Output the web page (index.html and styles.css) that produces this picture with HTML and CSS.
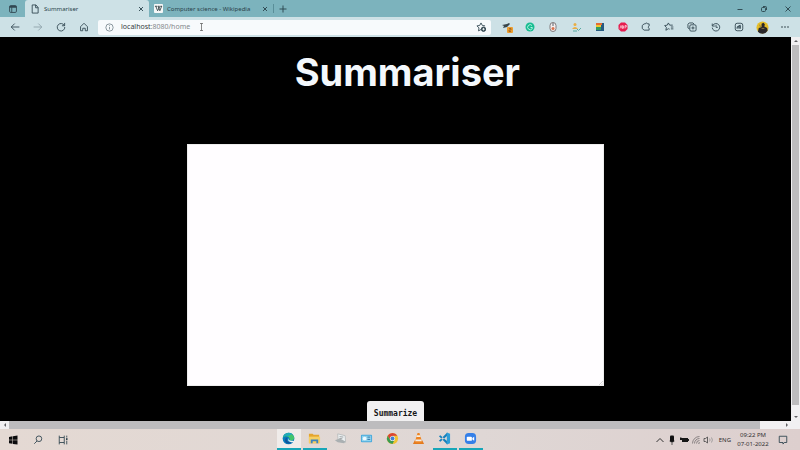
FILE: index.html
```html
<!DOCTYPE html>
<html lang="en">
<head>
<meta charset="utf-8">
<meta name="viewport" content="width=device-width, initial-scale=1">
<title>Summariser</title>
<link rel="stylesheet" href="styles.css">
</head>
<body>
<header class="tabstrip">
  <button class="tab-menu" aria-label="Tab actions"><svg class="icon" viewBox="0 0 16 16"><rect x="2.500" y="2.500" width="11" height="11" rx="2"/><path d="M2.500 4.500h11" stroke-width="3"/><path d="M6 5v8"/></svg></button>
  <div class="tab tab-active">
    <svg class="icon" viewBox="0 0 16 16"><path d="M3.500 1.500h6l3.500 4v9h-9.500zM9 1.500v4.500h4"/></svg>
    <span class="tab-title">Summariser</span>
    <button class="close" aria-label="Close Summariser"><svg viewBox="0 0 8 8"><path d="M2 2l4 4M6 2L2 6"/></svg></button>
  </div>
  <div class="tab">
    <svg class="wiki" viewBox="0 0 10 10"><rect width="10" height="10" rx="1" fill="#f6f8f8"/><path d="M1 2.500h2.500M4.200 2.500h2M7 2.500h2M2 2.500l2 5 2.700-5M4.500 2.500l2 5 2-5" fill="none" stroke="#29363a" stroke-width=".9"/></svg>
    <span class="tab-title">Computer science - Wikipedia</span>
    <button class="close" aria-label="Close Wikipedia"><svg viewBox="0 0 8 8"><path d="M2 2l4 4M6 2L2 6"/></svg></button>
  </div>
  <button class="new-tab" aria-label="New tab"><svg viewBox="0 0 8 8"><path d="M4 .5v7M.5 4h7"/></svg></button>
  <div class="window-controls">
    <button aria-label="Minimize"><svg viewBox="0 0 8 8"><path d="M1.500 4.500h5"/></svg></button>
    <button aria-label="Restore"><svg viewBox="0 0 8 8"><rect x="1.500" y="2.500" width="4" height="4" rx="1"/><path d="M3 1.500h2.500a1 1 0 0 1 1 1V5"/></svg></button>
    <button aria-label="Close window"><svg viewBox="0 0 8 8"><path d="M1.500 1.500l5 5M6.500 1.500l-5 5"/></svg></button>
  </div>
</header>

<nav class="toolbar" aria-label="Browser toolbar">
  <div class="nav-buttons">
    <button aria-label="Back"><svg class="icon" viewBox="0 0 16 16"><path d="M15 8H2M7.500 2.500L2 8l5.500 5.500"/></svg></button>
    <button class="faded" aria-label="Forward"><svg class="icon" viewBox="0 0 16 16"><path d="M1 8h13M8.500 2.500L14 8l-5.500 5.500"/></svg></button>
    <button aria-label="Reload"><svg class="icon" viewBox="0 0 16 16"><path d="M13.500 6A6 6 0 1 0 14 8M13.800 1.500V6H9.500"/></svg></button>
    <button aria-label="Home"><svg class="icon" viewBox="0 0 16 16"><path d="M2.500 7.500L8 2l5.500 5.500V14H10v-4H6v4H2.500z"/></svg></button>
  </div>
  <div class="address">
    <svg class="icon info" viewBox="0 0 16 16"><circle cx="8" cy="8" r="6.500"/><path d="M8 7v4.500M8 4v1.500"/></svg>
    <div class="url"><span class="host">localhost</span>:8080/home</div>
    <svg class="caret" viewBox="0 0 5 8"><path d="M1 .5h3M2.500.5v7M1 7.500h3"/></svg>
    <button class="favorite" aria-label="Add to favorites"><svg class="icon" viewBox="0 0 16 16"><path d="M8 12l-4 2.200.8-4.700L1.500 6.200l4.400-.7L8 1.500l2.100 4 4.400.7"/><circle cx="12" cy="11.500" r="3.500" fill="#354750"/><path d="M12 9.500v4M10 11.500h4" stroke="#eef3f5"/></svg></button>
  </div>
  <div class="extensions">
    <button aria-label="Extension with alerts"><svg viewBox="0 0 12 12"><path d="M1 4l5-1 2-1 1 1-3 3-4 1 1-2z" fill="#37454a"/><rect x="6" y="6" width="6" height="6" rx="1" fill="#ed9d2e"/><path d="M8 7.500h2V9H8v1.500h2" fill="none" stroke="#8b571a" stroke-width=".7"/></svg></button>
    <button aria-label="Grammarly"><svg viewBox="0 0 12 12"><circle cx="6" cy="6" r="4.500" fill="#18bc91"/><path d="M8 4.500A2.500 2.500 0 1 0 8.300 7.500V6.500H6.500" fill="none" stroke="#d5fff3" stroke-width=".8"/></svg></button>
    <button aria-label="Reader"><svg viewBox="0 0 12 12"><rect x="3" y="1.500" width="6" height="9" rx="3" fill="#f5eeee" stroke="#807b7d"/><circle cx="6" cy="7.500" r="1.500" fill="#db734d"/><path d="M6 2v3" stroke="#56636a"/></svg></button>
    <button aria-label="Shopping"><svg viewBox="0 0 12 12"><circle cx="5" cy="3.500" r="1.500" fill="#e9ae45"/><path d="M2 8q3-4 6 0z" fill="#e9ae45"/><path d="M3 10h4M7 8l1.500 1.500L11 7" stroke="#57aaa2" fill="none"/></svg></button>
    <button aria-label="Image tools"><svg viewBox="0 0 12 12"><rect x="2" y="2" width="8" height="8" fill="#265a80"/><path d="M2 2h6v2H2z" fill="#e36c36"/><path d="M2 4h5v2H2z" fill="#f2c72e"/><path d="M2 6h5v3H2z" fill="#329b61"/></svg></button>
    <button aria-label="AdBlock"><svg viewBox="0 0 12 12"><path d="M4 1.500h4L10.500 4v4L8 10.500H4L1.500 8V4z" fill="#e61d4f"/><path d="M3 7.500l1-3 1 3M5.500 7.500v-3l1.300.7-.8.8 1 .8zM8 7.500v-3h1.300v1.500H8" fill="none" stroke="#ffdce4" stroke-width=".7"/></svg></button>
    <button aria-label="Extensions"><svg class="icon" viewBox="0 0 16 16"><path d="M5 3h2a1.800 1.800 0 0 1 3.500 0H13v3.500a1.800 1.800 0 0 0 0 3.500v3H5L2 10.500v-5z"/></svg></button>
    <button aria-label="Favorites"><svg class="icon" viewBox="0 0 16 16"><path d="M9 11.500l-2-.8-4 2.500.8-4.600L1 5.700l4.200-.7L7 1.500l2 3.500h5M11 8h4M11 11h4"/></svg></button>
    <button aria-label="Collections"><svg class="icon" viewBox="0 0 16 16"><path d="M4 11L1.500 9.500V3.500l2-2h6l2 2"/><rect x="4.500" y="4.500" width="10" height="10" rx="2"/><path d="M9.500 7v5M7 9.500h5"/></svg></button>
    <button aria-label="History"><svg class="icon" viewBox="0 0 16 16"><path d="M2 2.500v4h4M2.500 6A6 6 0 1 1 2 9M8 4.500V8.500h3"/></svg></button>
    <button aria-label="Screenshot"><svg class="icon" viewBox="0 0 16 16"><rect x="2" y="2" width="12" height="12" rx="3"/><path d="M5 11V8l5-3v6M5 8h6M8 6v5"/></svg></button>
    <button aria-label="Profile"><svg class="avatar" viewBox="0 0 14 14"><circle cx="7" cy="7" r="6.500" fill="#e5bd28"/><path d="M2 11.500l1-4 3-1V3l2-1 1.500 1.500L9 6l3 1.500.5 3A6.500 6.500 0 0 1 2 11.500" fill="#29272a"/><path d="M4 4l1 3M6 8h3" stroke="#8b7841"/></svg></button>
    <button aria-label="Settings and more"><svg viewBox="0 0 12 12"><g fill="#293b43"><circle cx="3" cy="6" r=".8"/><circle cx="6" cy="6" r=".8"/><circle cx="9" cy="6" r=".8"/></g></svg></button>
  </div>
</nav>

<div class="viewport">
  <main class="page">
    <h1>Summariser</h1>
    <form class="summary-form">
      <div class="field">
        <textarea aria-label="Text to summarize"></textarea>
        <svg class="grip" viewBox="0 0 5 5"><path d="M0 5l5-5M3 5l2-2"/></svg>
      </div>
      <button class="summarize" type="button">Summarize</button>
    </form>
  </main>
  <div class="scroll-y"><svg viewBox="0 0 8 8"><path d="M2 5l2-2 2 2z"/></svg><div class="thumb"></div><svg viewBox="0 0 8 8"><path d="M2 3l2 2 2-2z"/></svg></div>
</div>
<div class="scroll-x"><svg viewBox="0 0 8 8"><path d="M5 2L3 4l2 2z"/></svg><div class="track"><div class="thumb"></div></div><svg viewBox="0 0 8 8"><path d="M3 2l2 2-2 2z"/></svg></div>

<footer class="taskbar">
  <div class="task-left">
    <button aria-label="Start"><svg viewBox="0 0 12 12"><path d="M2 3l3.500-.7v3.500H2zM6 2.200l4.500-.7v4.300H6zM2 6.300h3.500v3.500L2 9.300zM6 6.300h4.500v4.300L6 9.900z" fill="#0b0b0d"/></svg></button>
    <button aria-label="Search"><svg class="icon" viewBox="0 0 16 16"><circle cx="9.500" cy="6" r="4.500"/><path d="M6.500 9.500L2 14"/></svg></button>
    <button aria-label="Task view"><svg class="icon" viewBox="0 0 16 16"><path d="M2 1v3h8V1M2 15v-3h8v3M2 4v8M10 4v8M14 1v3M14 9v6"/><path d="M14 5v3" stroke-width="2.500"/></svg></button>
  </div>
  <div class="task-apps">
    <button class="running current" aria-label="Microsoft Edge"><svg viewBox="0 0 14 14"><circle cx="7" cy="7" r="6.300" fill="#087cbd"/><path d="M1 6C2 .5 10-.8 13 5c1 4-3 5-5 3.500 1-2-1-4-4-4-1.500 0-2.500 1-3 1.500z" fill="#43c56d"/><path d="M1 6C2 1 8-.5 11 2L7 4.500C4 3.700 2 4.500 1 6z" fill="#20abb8"/><path d="M6 5.800c-2.500 3 .5 6 5 5C7 14 3 12 3.300 9 3.400 7 4.500 6 6 5.800z" fill="#13539a"/><path d="M7 6.500c-.8 2 1.500 3.500 5 2.800L13.500 10 12 11c-4 .5-6.500-2-5-4.500z" fill="#eef4f5"/></svg></button>
    <button class="running" aria-label="File Explorer"><svg viewBox="0 0 14 14"><path d="M1 2h4l1 1h6v9H1z" fill="#e4a52e"/><path d="M1 5h12v7H1z" fill="#f6cf63"/><path d="M3 12V8h8v4H9v-2H5v2z" fill="#3d83bd"/></svg></button>
    <button aria-label="Scanner"><svg viewBox="0 0 14 14"><path d="M4 2l8 2 .5 7-8-1z" fill="#edf0f1" stroke="#a9afb0" stroke-width=".7"/><path d="M1 9l5-2 6 3-1 2-7-1z" fill="#aab0b2"/><path d="M6 5l4 .5M6 7l3 .3" stroke="#858b8e" stroke-width=".8"/></svg></button>
    <button aria-label="Control panel"><svg viewBox="0 0 14 14"><rect x="1" y="3" width="12" height="8" rx="1" fill="#45a7da"/><rect x="2" y="4" width="10" height="6" fill="#91d4ef"/><circle cx="5" cy="7" r="2" fill="#f0faff"/><path d="M8 5.500h3M8 8h3" stroke="#3273a4"/></svg></button>
    <button aria-label="Google Chrome"><svg viewBox="0 0 14 14"><circle cx="7" cy="7" r="6" fill="#efc332"/><path d="M1.800 4A6 6 0 0 1 12.200 4H7L4.500 8.500z" fill="#d94438"/><path d="M1.800 4L4.500 8.500 9 9l-2 4A6 6 0 0 1 1.800 4z" fill="#399b52"/><circle cx="7" cy="7" r="2.800" fill="#f3f3ef"/><circle cx="7" cy="7" r="2.100" fill="#4280d4"/></svg></button>
    <button aria-label="VLC"><svg viewBox="0 0 14 14"><path d="M3 9h8l2 4H1z" fill="#e37a1d"/><path d="M6 1h2l3 10q-4 2-8 0z" fill="#ee8422"/><path d="M5.300 3.500h3.400l.7 2H4.600zM4 8h6l.6 2H3.400z" fill="#f3eee5"/></svg></button>
    <button class="running" aria-label="Visual Studio Code"><svg viewBox="0 0 14 14"><path d="M1 4.500L2.500 3.500 10 10v3.500zM1 9.500L2.500 10.500 10 4V.5z" fill="#1680bc"/><path d="M9.500.5L13 2v10l-3.500 1.500z" fill="#2d9ed8"/></svg></button>
    <button class="running" aria-label="Zoom"><svg viewBox="0 0 14 14"><rect x="1" y="1" width="12" height="12" rx="4" fill="#347fe8"/><rect x="3" y="5" width="5.500" height="4.500" rx="1" fill="#fff"/><path d="M9 6.500L11 5v4.500L9 8z" fill="#fff"/></svg></button>
  </div>
  <div class="tray">
    <svg viewBox="0 0 12 12"><path d="M2.500 8L6 4.500 9.500 8" fill="none" stroke="#333"/></svg>
    <svg viewBox="0 0 12 12"><rect x="4" y="1.500" width="4" height="6.500" rx="1" fill="#111"/><path d="M3.500 7q2.500 3 5 0M6 9v2" fill="none" stroke="#333" stroke-width=".8"/></svg>
    <svg viewBox="0 0 12 12"><path d="M3 4h7v4H4V6H2V3.500h2z" fill="#171717"/><path d="M10.500 5v2" stroke="#222"/></svg>
    <svg viewBox="0 0 12 12"><g fill="none" stroke="#666163" stroke-width=".7"><path d="M2.500 9.500a7 7 0 0 1 7-7M4.500 9.500a5 5 0 0 1 5-5M6.500 9.500a3 3 0 0 1 3-3"/></g><path d="M8 9.500h1.500V8z" fill="#444"/></svg>
    <svg viewBox="0 0 12 12"><path d="M2 4.500h1.500L5.500 3v6L3.500 7.500H2z" fill="none" stroke="#444" stroke-width=".8"/><path d="M7.500 4.500q1.200 1.500 0 3M9.500 3.500q1.800 2.500 0 5" fill="none" stroke="#888" stroke-width=".7"/></svg>
    <span class="lang">ENG</span>
    <div class="clock"><time>09:22 PM</time><time>07-01-2022</time></div>
    <button class="notices" aria-label="Notifications"><svg class="icon" viewBox="0 0 16 16"><path d="M2 2h12v10h-4l-2 2.500V12H2z"/></svg></button>
  </div>
</footer>
</body>
</html>
```
FILE: styles.css
```css
* { box-sizing: border-box; }
body {
  margin: 0;
  height: 100vh;
  display: flex;
  flex-direction: column;
  overflow: hidden;
  background: #000;
  color: #29414a;
  font: 6px/10px "Noto Sans", "Open Sans", sans-serif;
}
button {
  display: flex;
  align-items: center;
  justify-content: center;
  padding: 0;
  border: 0;
  background: transparent;
  color: inherit;
}
svg { display: block; flex: none; width: 12px; height: 12px; }
.icon { width: 10px; height: 10px; fill: none; stroke: #304650; stroke-width: 1.4; }

.tabstrip { display: flex; flex: none; height: 17px; background: #7cb3bd; }
.tab-menu { width: 25px; }
.tab {
  display: flex;
  align-items: center;
  gap: 4px;
  width: 124px;
  padding: 0 4px 0 5px;
}
.tab-active { background: #cde1e6; border-radius: 3px 3px 0 0; }
.tab-title { flex: 1; white-space: nowrap; }
.wiki { width: 9px; height: 9px; }
.close svg, .new-tab svg, .window-controls svg {
  width: 8px;
  height: 8px;
  fill: none;
  stroke: #29434c;
  stroke-width: 0.9;
}
.new-tab { width: 19px; height: 9px; align-self: center; border-left: 1px solid #598e98; }
.window-controls { display: flex; margin-left: auto; }
.window-controls button { width: 24px; }

.toolbar {
  display: flex;
  flex: none;
  align-items: center;
  height: 20px;
  padding: 0 3px;
  background: #cde1e6;
}
.nav-buttons { display: flex; margin-right: 3px; }
.nav-buttons button { width: 23px; }
.faded { opacity: 0.4; }
.address {
  display: flex;
  align-items: center;
  flex: 1;
  height: 15px;
  margin-right: 4px;
  padding: 0 5px 0 7px;
  border-radius: 2px;
  background: #f7fafc;
}
.info { width: 9px; height: 9px; stroke: #708087; }
.url { margin: 0 9px 0 7px; color: #85898c; font-size: 7px; }
.host { color: #343b3e; }
.caret { width: 5px; height: 8px; fill: none; stroke: #555; stroke-width: 0.7; }
.favorite { margin-left: auto; }
.extensions { display: flex; width: 302px; }
.extensions button { flex: 1; }
.avatar { width: 13px; height: 13px; }

.viewport { display: flex; flex: 1; min-height: 0; }
.page { flex: 1; min-width: 0; overflow: hidden; background: #000; }
h1 {
  width: 103%;
  margin: 0;
  padding-top: 10px;
  color: #f4f8fc;
  font: 700 38px/50px Inter, sans-serif;
  text-align: center;
}
.summary-form {
  display: flex;
  flex-direction: column;
  align-items: center;
  gap: 15px;
  margin-top: 47px;
}
.field { position: relative; width: 52.7%; }
textarea {
  display: block;
  width: 100%;
  height: 242px;
  padding: 6px;
  border: 1px solid #eee;
  outline: 0;
  resize: none;
  background: #fffdff;
}
.grip { position: absolute; right: 1px; bottom: 1px; width: 4px; height: 4px; fill: none; stroke: #aaa; stroke-width: 0.6; }
.summarize {
  padding: 6px 7px;
  border-radius: 3px;
  background: #f1f0f1;
  color: #161518;
  font: 700 8px/13px "DejaVu Sans Mono", monospace;
}
.scroll-y {
  display: flex;
  flex-direction: column;
  align-items: center;
  width: 9px;
  background: #f1f0f2;
}
.scroll-y svg, .scroll-x svg { width: 8px; height: 8px; fill: #606064; }
.scroll-y .thumb { flex: 1; width: 7px; margin-bottom: 8px; background: #bdbcbe; }
.scroll-x { display: flex; flex: none; height: 8px; padding: 0 9px 0 1px; background: #f1f0f2; }
.track { flex: 1; }
.scroll-x .thumb { width: 97%; height: 8px; background: #bdbcbe; }

.taskbar {
  display: flex;
  flex: none;
  height: 21px;
  background: linear-gradient(90deg, #e4d9d3, #dfd7d5 60%, #ddcfce);
  color: #333032;
}
.task-left { display: flex; flex: 1; }
.task-left button { width: 25px; }
.task-apps { display: flex; gap: 2px; margin-right: 32px; }
.task-apps button { width: 24px; border-bottom: 2px solid transparent; }
.task-apps .running { border-bottom-color: #17a6b8; }
.task-apps .current { background: #f0ecea; }
.task-apps svg { width: 13px; height: 13px; }
.tray { display: flex; flex: 1; align-items: center; justify-content: flex-end; padding-right: 9px; }
.lang { margin: 0 5px; }
.clock { display: flex; flex-direction: column; align-items: center; width: 34px; line-height: 9px; white-space: nowrap; }
.notices { width: 16px; margin-left: 5px; }
```
